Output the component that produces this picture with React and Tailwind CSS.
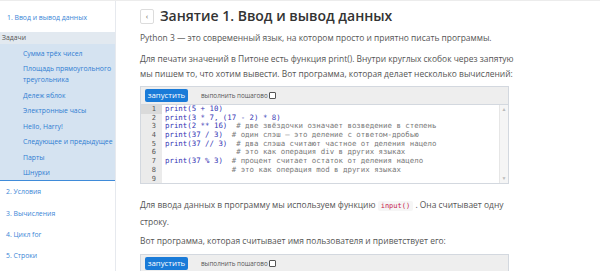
import React from "react";

const font = { fontFamily: '"Open Sans", "Noto Sans", sans-serif' };

function Sidebar() {
  const tasks = [
    "Сумма трёх чисел",
    "Площадь прямоугольного треугольника",
    "Дележ яблок",
    "Электронные часы",
    "Hello, Harry!",
    "Следующее и предыдущее",
    "Парты",
    "Шнурки",
  ];
  const lessons = ["2. Условия", "3. Вычисления", "4. Цикл for", "5. Строки"];
  return (
    <div className="w-[116px] shrink-0 border-r border-[#e6e9ee] text-[6.85px] whitespace-nowrap">
      <div className="h-[30.5px] pt-[6px] pl-[7px]">
        <div className="h-[22px] leading-[22px] text-[#3a86d6]">1. Ввод и вывод данных</div>
      </div>
      <div className="h-[12.5px] leading-[12.5px] bg-[#e2e9f0] pl-[2px] text-[#555]">Задачи</div>
      <div className="bg-[#d5e3f1] pt-[1.25px] border-b border-[#3f8bd9]">
        {tasks.map((t) => (
          <div key={t} className="pl-[23px] pr-[2px] py-[2.25px] leading-[11px] text-[#2f7dd1]">
            {t === "Площадь прямоугольного треугольника" ? (
              <>
                Площадь прямоугольного
                <br />
                треугольника
              </>
            ) : (
              t
            )}
          </div>
        ))}
      </div>
      {lessons.map((l) => (
        <div key={l} className="h-[21.3px] leading-[21.3px] pl-[6px] text-[#3a86d6]">
          {l}
        </div>
      ))}
    </div>
  );
}

function Toolbar() {
  return (
    <div className="h-[18px] bg-[#eeeeee] border-b border-[#d3d8df] flex items-center pl-[4px]">
      <div className="h-[13px] w-[43px] rounded-[2px] bg-[#1a7bd8] text-white text-[7.8px] leading-[13px] text-center">
        запустить
      </div>
      <div className="ml-[13px] text-[6.3px] text-[#555] flex items-center">
        выполнить пошагово
        <span className="ml-[1px] inline-block w-[7px] h-[7px] border border-[#555] bg-white rounded-[1px]"></span>
      </div>
    </div>
  );
}

const codeLines = [
  ["print(5 + 10)", ""],
  ["print(3 * 7, (17 - 2) * 8)", ""],
  ["print(2 ** 16)  ", "# две звёздочки означает возведение в степень"],
  ["print(37 / 3)  ", "# один слэш — это деление с ответом-дробью"],
  ["print(37 // 3)  ", "# два слэша считают частное от деления нацело"],
  ["                ", "# это как операция div в других языках"],
  ["print(37 % 3)  ", "# процент считает остаток от деления нацело"],
  ["               ", "# это как операция mod в других языках"],
  ["", ""],
];

const mono = { fontFamily: '"DejaVu Sans Mono", "Liberation Mono", monospace' };

function CodeBlock() {
  return (
    <div className="border border-[#d3d8df] w-[369px]">
      <Toolbar />
      <div className="flex relative">
        <div className="w-[21px] bg-[#ebebeb] shrink-0">
          {codeLines.map((_, i) => (
            <div
              key={i}
              style={mono}
              className={`h-[8.7px] leading-[8.7px] text-right pr-[6px] text-[7px] text-[#555] ${
                i === 0 ? "bg-[#dadada]" : ""
              }`}
            >
              {i + 1}
            </div>
          ))}
        </div>
        <div className="flex-1 pl-[3px] text-[7.4px] overflow-hidden" style={mono}>
          {codeLines.map(([c, cm], i) => (
            <div key={i} className="h-[8.7px] leading-[8.7px] whitespace-pre">
              <span className="text-[#3535b5]">{c}</span>
              <span className="text-[#7a7a7a]">{cm}</span>
            </div>
          ))}
        </div>
        <div className="w-[9px] shrink-0 bg-[#f5f5f5] border-l border-[#e6e6e6] flex flex-col justify-between items-center text-[#bbb] text-[5px] py-[1px]">
          <span>▲</span>
          <span>▼</span>
        </div>
      </div>
    </div>
  );
}

export default function App() {
  return (
    <div className="w-[600px] h-[271px] overflow-hidden bg-white flex border-t border-[#ececec]" style={font}>
      <Sidebar />
      <div className="pl-[24px] pt-[7px] flex-1 text-[#555] text-[8.45px]">
        <div className="flex items-center h-[16px]">
          <div className="w-[14px] h-[15px] border border-[#dcdcdc] rounded-[2px] flex items-center justify-center text-[8px] text-[#666]">
            ‹
          </div>
          <div className="ml-[6px] text-[14px] font-semibold text-[#333] leading-[16px]">
            Занятие 1. Ввод и вывод данных
          </div>
        </div>
        <div className="mt-[6px] leading-[15px]">
          Python 3 — это современный язык, на котором просто и приятно писать программы.
        </div>
        <div className="mt-[6px] leading-[15px]">
          Для печати значений в Питоне есть функция print(). Внутри круглых скобок через запятую
          <br />
          мы пишем то, что хотим вывести. Вот программа, которая делает несколько вычислений:
        </div>
        <div className="mt-[5px]">
          <CodeBlock />
        </div>
        <div className="mt-[13px] leading-[15px]">
          Для ввода данных в программу мы используем функцию{" "}
          <span
            style={mono}
            className="bg-[#f6f6f6] text-[#c7254e] text-[7px] px-[3px] py-[1px] rounded-[2px]"
          >
            input()
          </span>{" "}
          . Она считывает одну
          <br />
          строку.
        </div>
        <div className="mt-[4px] leading-[15px]">
          Вот программа, которая считывает имя пользователя и приветствует его:
        </div>
        <div className="mt-[6px] border border-[#d3d8df] w-[369px]">
          <Toolbar />
        </div>
      </div>
    </div>
  );
}
